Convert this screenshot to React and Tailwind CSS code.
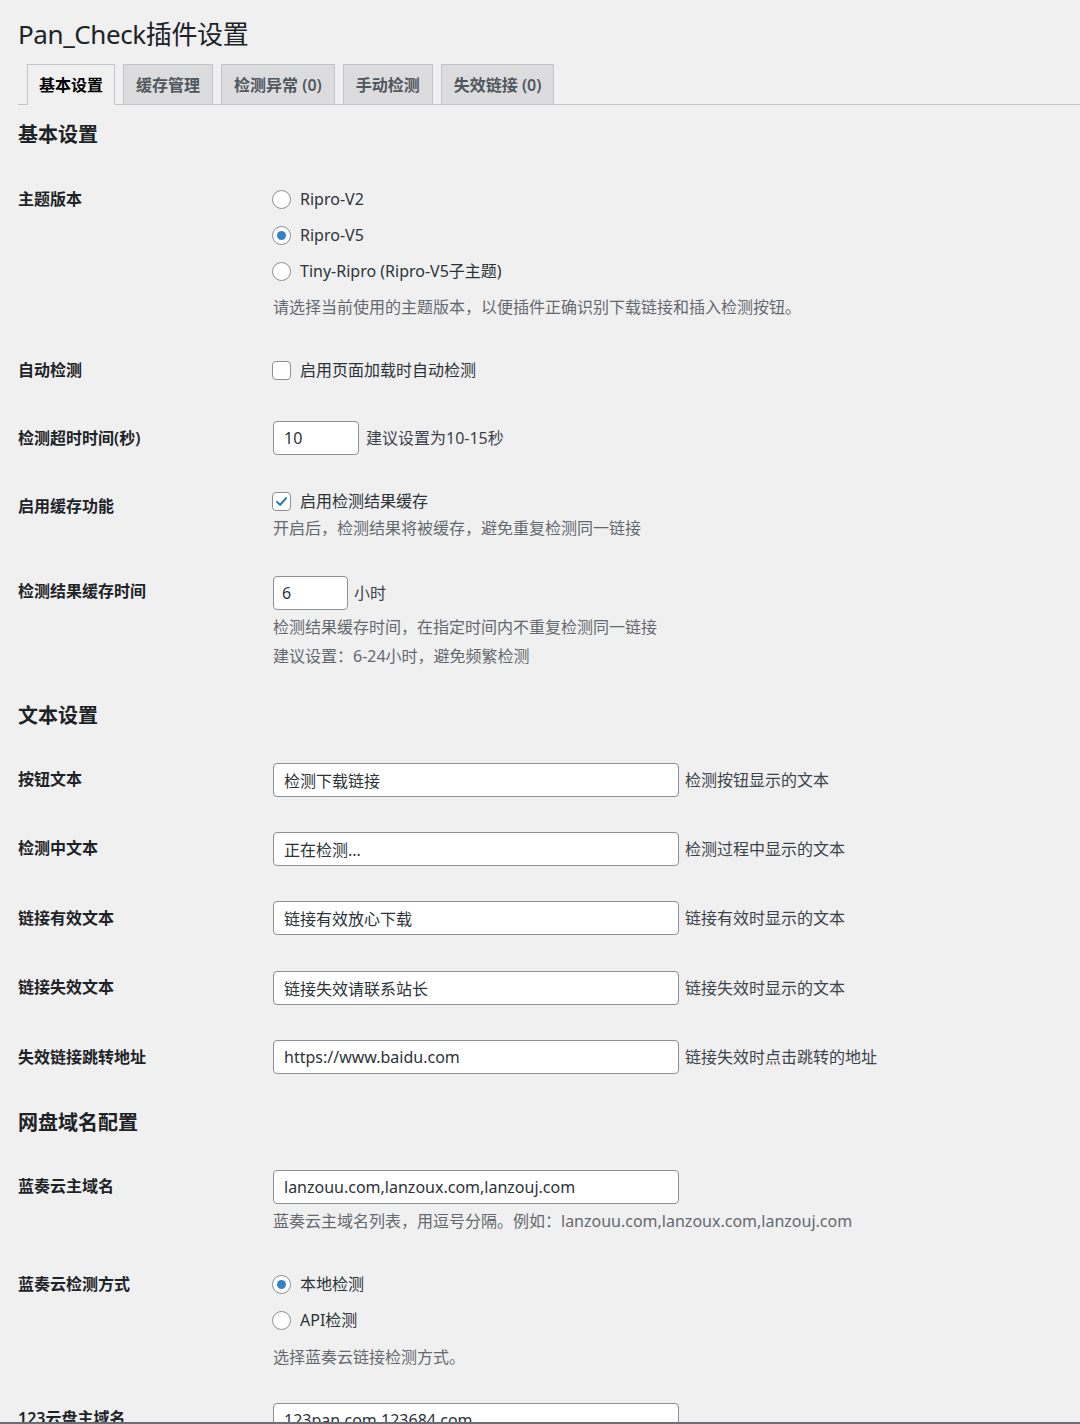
import React from "react";

const LABEL = "w-[255px] shrink-0 text-[16px] leading-[24px] font-semibold text-[#1d2327]";
const DESC = "text-[16px] leading-[24px] text-[#646970]";
const INLINE = "text-[16px] leading-[24px] text-[#3c434a]";

function Radio({ checked, label }) {
  return (
    <div className="flex items-center h-[36px] -ml-[1px]">
      <span className="w-[19px] h-[19px] rounded-full border border-[#8c8f94] bg-white flex items-center justify-center shrink-0 mr-[9px]">
        {checked && <span className="w-[9px] h-[9px] rounded-full bg-[#3582c4]" />}
      </span>
      <span className="text-[16px] text-[#2c3338]">{label}</span>
    </div>
  );
}

function Checkbox({ checked, label }) {
  return (
    <div className="flex items-center h-[24px] -ml-[1px]">
      <span className="w-[19px] h-[19px] rounded-[4px] border border-[#8c8f94] bg-white flex items-center justify-center shrink-0 mr-[9px]">
        {checked && (
          <svg width="15" height="15" viewBox="0 0 20 20">
            <path d="M4 10.5 L8.2 14.5 L16 5.5" fill="none" stroke="#2271b1" strokeWidth="2.6" strokeLinecap="round" strokeLinejoin="round" />
          </svg>
        )}
      </span>
      <span className="text-[16px] text-[#2c3338]">{label}</span>
    </div>
  );
}

function TextInput({ value, w, pl }) {
  return (
    <input
      readOnly
      value={value}
      className={`h-[34px] ${w} ${pl} border border-[#8c8f94] rounded-[4px] bg-white text-[16px] text-[#2c3338] outline-none font-[family-name:Noto_Sans,Noto_Sans_CJK_SC,sans-serif]`}
    />
  );
}

function Heading({ mt, children }) {
  return <h2 className={`${mt} text-[20px] leading-[28px] font-semibold text-[#1d2327]`}>{children}</h2>;
}

function TextRow({ mt, pt, label, value, note }) {
  return (
    <div className={`flex ${mt}`}>
      <div className={`${LABEL} ${pt}`}>{label}</div>
      <div className="flex items-center">
        <TextInput value={value} w="w-[406px]" pl="pl-[10px]" />
        <span className={`${INLINE} ml-[6px]`}>{note}</span>
      </div>
    </div>
  );
}

const tabs = [
  { t: "基本设置", active: true },
  { t: "缓存管理" },
  { t: "检测异常 (0)" },
  { t: "手动检测" },
  { t: "失效链接 (0)" },
];

export default function App() {
  return (
    <div className="h-[1424px] overflow-hidden border-b-2 border-[#6b6f74] bg-[#f0f0f1] font-[family-name:Noto_Sans,Noto_Sans_CJK_SC,sans-serif]">
      <div className="pl-[18px]">
        <h1 className="pt-[17px] text-[26px] leading-[34px] font-normal tracking-[-0.4px] text-[#1d2327]">Pan_Check插件设置</h1>

        <div className="mt-[13px] flex border-b border-[#c3c4c7] pl-[9px] gap-[8px]">
          {tabs.map((tab) => (
            <div
              key={tab.t}
              className={
                tab.active
                  ? "h-[41px] -mb-px px-[11px] flex items-center border border-[#c3c4c7] border-b-[#f0f0f1] bg-[#f0f0f1] text-[16px] font-semibold text-[#000]"
                  : "h-[41px] -mb-px px-[12px] flex items-center border border-[#c3c4c7] bg-[#dcdcde] text-[16px] font-semibold text-[#50575e]"
              }
            >
              {tab.t}
            </div>
          ))}
        </div>

        <Heading mt="mt-[16px]">基本设置</Heading>

        <div className="flex mt-[32px]">
          <div className={`${LABEL} pt-[6px]`}>主题版本</div>
          <div>
            <Radio label="Ripro-V2" />
            <Radio checked label="Ripro-V5" />
            <Radio label="Tiny-Ripro (Ripro-V5子主题)" />
            <p className={`${DESC} mt-[6px]`}>请选择当前使用的主题版本，以便插件正确识别下载链接和插入检测按钮。</p>
          </div>
        </div>

        <div className="flex mt-[39px]">
          <div className={LABEL}>自动检测</div>
          <Checkbox label="启用页面加载时自动检测" />
        </div>

        <div className="flex mt-[39px]">
          <div className={`${LABEL} pt-[5px]`}>检测超时时间(秒)</div>
          <div className="flex items-center">
            <TextInput value="10" w="w-[86px]" pl="pl-[10px]" />
            <span className={`${INLINE} ml-[7px]`}>建议设置为10-15秒</span>
          </div>
        </div>

        <div className="flex mt-[34px]">
          <div className={`${LABEL} pt-[5px]`}>启用缓存功能</div>
          <div>
            <Checkbox checked label="启用检测结果缓存" />
            <p className={`${DESC} mt-[3px]`}>开启后，检测结果将被缓存，避免重复检测同一链接</p>
          </div>
        </div>

        <div className="flex mt-[36px]">
          <div className={`${LABEL} pt-[3px]`}>检测结果缓存时间</div>
          <div>
            <div className="flex items-center">
              <TextInput value="6" w="w-[75px]" pl="pl-[8px]" />
              <span className={`${INLINE} ml-[6px]`}>小时</span>
            </div>
            <p className={`${DESC} mt-[5px]`}>检测结果缓存时间，在指定时间内不重复检测同一链接</p>
            <p className={`${DESC} mt-[5px]`}>建议设置：6-24小时，避免频繁检测</p>
          </div>
        </div>

        <Heading mt="mt-[34px]">文本设置</Heading>

        <TextRow mt="mt-[33px]" pt="pt-[4px]" label="按钮文本" value="检测下载链接" note="检测按钮显示的文本" />
        <TextRow mt="mt-[35px]" pt="pt-[4px]" label="检测中文本" value="正在检测..." note="检测过程中显示的文本" />
        <TextRow mt="mt-[35px]" pt="pt-[5px]" label="链接有效文本" value="链接有效放心下载" note="链接有效时显示的文本" />
        <TextRow mt="mt-[36px]" pt="pt-[4px]" label="链接失效文本" value="链接失效请联系站长" note="链接失效时显示的文本" />
        <TextRow mt="mt-[35px]" pt="pt-[5px]" label="失效链接跳转地址" value="https://www.baidu.com" note="链接失效时点击跳转的地址" />

        <Heading mt="mt-[35px]">网盘域名配置</Heading>

        <div className="flex mt-[33px]">
          <div className={`${LABEL} pt-[4px]`}>蓝奏云主域名</div>
          <div>
            <TextInput value="lanzouu.com,lanzoux.com,lanzouj.com" w="w-[406px]" pl="pl-[10px]" />
            <p className={`${DESC} mt-[5px]`}>蓝奏云主域名列表，用逗号分隔。例如：lanzouu.com,lanzoux.com,lanzouj.com</p>
          </div>
        </div>

        <div className="flex mt-[33px]">
          <div className={`${LABEL} pt-[6px]`}>蓝奏云检测方式</div>
          <div>
            <Radio checked label="本地检测" />
            <Radio label="API检测" />
            <p className={`${DESC} mt-[7px]`}>选择蓝奏云链接检测方式。</p>
          </div>
        </div>

        <div className="flex mt-[34px]">
          <div className={`${LABEL} pt-[3px]`}>123云盘主域名</div>
          <div>
            <TextInput value="123pan.com,123684.com" w="w-[406px]" pl="pl-[10px]" />
          </div>
        </div>
      </div>
    </div>
  );
}
